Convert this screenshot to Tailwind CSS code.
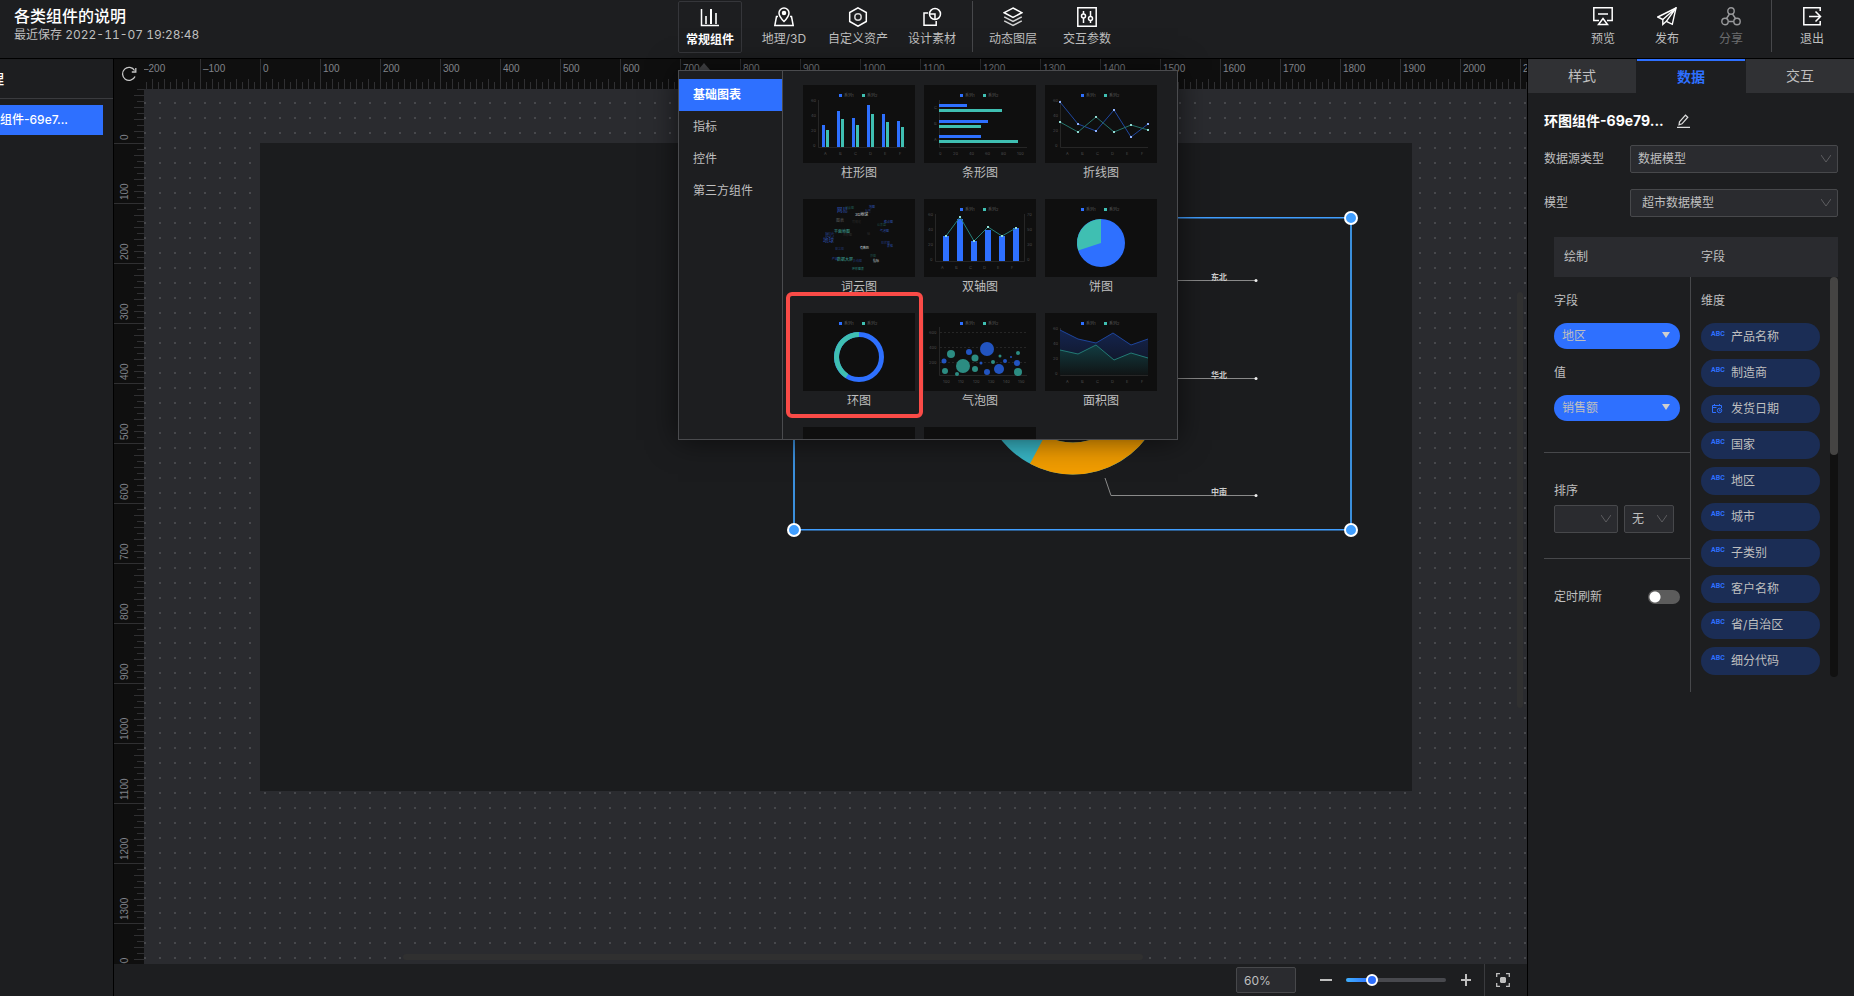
<!DOCTYPE html>
<html lang="zh-CN">
<head>
  <meta charset="UTF-8" />
  <meta name="viewport" content="width=device-width, initial-scale=1" />
  <title>各类组件的说明</title>
  <script src="https://cdn.jsdelivr.net/npm/@tailwindcss/browser@4"></script>
</head>
<body class="h-screen flex flex-col overflow-hidden bg-[#1d1e20] font-['Inter','Noto_Sans_CJK_SC',sans-serif] text-xs text-[#bfbfbf]">

  <!-- Header -->
  <header class="relative z-20 flex h-[59px] shrink-0 border-b border-black">
    <div class="w-[678px] shrink-0 pl-3.5 pt-1.5">
      <h1 class="text-base leading-5 font-medium text-white">各类组件的说明</h1>
      <p class="leading-[18px] tabular-nums">最近保存 2022-11-07 19:28:48</p>
    </div>

    <nav class="flex pt-px" aria-label="组件">
      <div class="relative">
        <button aria-expanded="true" class="flex h-[52px] w-16 flex-col items-center gap-0.5 rounded-xs border border-[#35363a] pt-1.5 font-bold text-white">
          <svg class="size-5" viewBox="0 0 20 20" fill="none" stroke="currentColor" aria-hidden="true">
            <path d="M1.500 1v16.500H19" stroke-width="1.500"/><path d="M6 8v8M16 5v11" stroke-width="2" opacity=".8"/><path d="M11 1v15" stroke-width="2"/>
          </svg>
          <span class="leading-5">常规组件</span>
        </button>

        <!-- Component picker -->
        <div class="absolute left-5 top-[62px] border-x-[6px] border-b-[7px] border-x-transparent border-b-[#4a4b4e]"></div>
        <div class="absolute left-0 top-[69px] flex h-[370px] w-[500px] overflow-hidden border border-[#4a4b4e] bg-[#1d1e20] shadow-[0_0_28px_rgba(0,0,0,0.6)]">
          <ul class="w-[104px] shrink-0 border-r border-[#4a4b4e] pt-2">
            <li><a href="#" class="block bg-[#2e70ff] px-3.5 leading-8 font-bold text-white">基础图表</a></li>
            <li><a href="#" class="block px-3.5 leading-8">指标</a></li>
            <li><a href="#" class="block px-3.5 leading-8">控件</a></li>
            <li><a href="#" class="block px-3.5 leading-8">第三方组件</a></li>
          </ul>
          <div class="grid flex-1 auto-rows-[98px] grid-cols-[112px_112px_112px] content-start gap-x-[9px] gap-y-4 px-5 pt-3.5">
            <figure class="text-center">
              <svg class="h-[78px] w-[112px] bg-[#0f0f0f]" viewBox="0 0 112 78" aria-hidden="true">
                <g id="legend"><path d="M36 9h3v3h-3z" fill="#2e70ff"/><path d="M59 9h3v3h-3z" fill="#3fbfb2"/><text x="41" y="12" font-size="4" fill="#555">系列1</text><text x="64" y="12" font-size="4" fill="#555">系列2</text></g>
                <g id="axes" font-size="4" fill="#4c4c4c">
                  <path d="M15.500 15v47.500H103" fill="none" stroke="#262626"/>
                  <text x="8" y="17">60</text><text x="8" y="32">40</text><text x="8" y="47">20</text><text x="10" y="62">0</text>
                  <text x="21" y="70">A</text><text x="36" y="70">B</text><text x="51" y="70">C</text><text x="66" y="70">D</text><text x="81" y="70">E</text><text x="96" y="70">F</text>
                </g>
                <path fill="#2e70ff" d="M19 40h3v22h-3zM34 26h3v36h-3zM49 33h3v29h-3zM64 20h3v42h-3zM79 29h3v33h-3zM94 36h3v26h-3z"/>
                <path fill="#3fbfb2" d="M23 45h3v17h-3zM38 34h3v28h-3zM53 40h3v22h-3zM68 29h3v33h-3zM83 37h3v25h-3zM98 42h3v20h-3z"/>
              </svg>
              <figcaption class="leading-5">柱形图</figcaption>
            </figure>
            <figure class="text-center">
              <svg class="h-[78px] w-[112px] bg-[#0f0f0f]" viewBox="0 0 112 78" aria-hidden="true">
                <use href="#legend"/>
                <path d="M15.500 15v47.500H103" fill="none" stroke="#262626"/>
                <g font-size="4" fill="#4c4c4c"><text x="10" y="24">C</text><text x="10" y="40">B</text><text x="10" y="56">A</text><text x="15" y="70">0</text><text x="29" y="70">20</text><text x="45" y="70">40</text><text x="61" y="70">60</text><text x="77" y="70">80</text><text x="93" y="70">100</text></g>
                <path fill="#2e70ff" d="M15 19h28v3H15zM15 35h49v3H15zM15 50h42v3H15z"/>
                <path fill="#3fbfb2" d="M15 24h63v3H15zM15 40h42v3H15zM15 55h79v3H15z"/>
              </svg>
              <figcaption class="leading-5">条形图</figcaption>
            </figure>
            <figure class="text-center">
              <svg class="h-[78px] w-[112px] bg-[#0f0f0f]" viewBox="0 0 112 78" aria-hidden="true">
                <use href="#legend"/><use href="#axes"/>
                <path d="M15 17l18 22 18 7 18-21 17 27 17-13" fill="none" stroke="#1f47a0"/>
                <path d="M15 37l18 10 18-15 18 15 17-7 17 5" fill="none" stroke="#26736c"/>
                <path fill="#8fb2ff" d="M14 16h2v2h-2zM32 38h2v2h-2zM50 45h2v2h-2zM68 24h2v2h-2zM85 51h2v2h-2zM102 38h2v2h-2z"/>
                <path fill="#8fd9d1" d="M14 36h2v2h-2zM32 46h2v2h-2zM50 31h2v2h-2zM68 46h2v2h-2zM85 39h2v2h-2zM102 44h2v2h-2z"/>
              </svg>
              <figcaption class="leading-5">折线图</figcaption>
            </figure>
            <figure class="text-center">
              <svg class="h-[78px] w-[112px] bg-[#0f0f0f]" viewBox="0 0 112 78" font-size="3" aria-hidden="true">
                <g fill="#2c4da8"><text x="34" y="13" font-size="5.500">网易</text><text x="66" y="9">地图</text><text x="62" y="13" opacity=".6">标签</text><text x="22" y="37" font-size="5" opacity=".7">图片</text><text x="20" y="43" font-size="5.500">地球</text><text x="81" y="24">散点图</text><text x="77" y="33">气泡图</text><text x="78" y="45" opacity=".7">柱状图</text><text x="84" y="48">表格</text><text x="29" y="61">产品</text><text x="50" y="63" opacity=".6">折线图</text><text x="32" y="51" opacity=".5">雷达图</text></g>
                <g fill="#2b8179"><text x="42" y="10" opacity=".6">词云图</text><text x="31" y="34" fill="#3fa398" font-size="4">平面地图</text><text x="34" y="62" fill="#3fa398" font-size="4">数据大屏</text><text x="49" y="71">环形图表</text><text x="74" y="27" opacity=".5">仪表盘</text><text x="67" y="58" opacity=".5">饼图</text></g>
                <g fill="#c9d3d6"><text x="52" y="17" font-size="4">3D地球</text><text x="57" y="50">有数BI</text><text x="70" y="63">指标</text></g>
                <g fill="#2b2b2b"><text x="33" y="23" font-size="4" fill="#555">图表</text><text x="49" y="24">可视化</text><text x="40" y="37">面积图</text><text x="64" y="36">轴</text></g>
              </svg>
              <figcaption class="leading-5">词云图</figcaption>
            </figure>
            <figure class="text-center">
              <svg class="h-[78px] w-[112px] bg-[#0f0f0f]" viewBox="0 0 112 78" aria-hidden="true">
                <use href="#legend"/>
                <path d="M11.500 15v47.500h89V15" fill="none" stroke="#262626"/>
                <g font-size="4" fill="#4c4c4c"><text x="4" y="17">60</text><text x="4" y="32">40</text><text x="4" y="47">20</text><text x="6" y="62">0</text><text x="103" y="17">70</text><text x="103" y="32">50</text><text x="103" y="47">30</text><text x="103" y="62">0</text><text x="17" y="70">A</text><text x="31" y="70">B</text><text x="45" y="70">C</text><text x="59" y="70">D</text><text x="73" y="70">E</text><text x="87" y="70">F</text></g>
                <path fill="#2e70ff" d="M19 37h6v25h-6zM33 20h6v42h-6zM47 42h6v20h-6zM61 31h6v31h-6zM75 37h6v25h-6zM89 29h6v33h-6z"/>
                <path d="M22 37l14-19 14 24 14-14 14 9 14-8" fill="none" stroke="#26807a"/>
                <path fill="#8fe0d8" d="M21 36h2v2h-2zM35 17h2v2h-2zM49 41h2v2h-2zM63 27h2v2h-2zM77 36h2v2h-2zM91 28h2v2h-2z"/>
              </svg>
              <figcaption class="leading-5">双轴图</figcaption>
            </figure>
            <figure class="text-center">
              <svg class="h-[78px] w-[112px] bg-[#0f0f0f]" viewBox="0 0 112 78" aria-hidden="true">
                <use href="#legend"/>
                <circle cx="56" cy="44" r="24" fill="#2e70ff"/><path d="M56 44V20A24 24 0 0 0 33.200 51.500z" fill="#3fbfb2"/>
              </svg>
              <figcaption class="leading-5">饼图</figcaption>
            </figure>
            <figure class="text-center">
              <svg class="h-[78px] w-[112px] bg-[#0f0f0f]" viewBox="0 0 112 78" aria-hidden="true">
                <use href="#legend"/>
                <circle cx="56" cy="44" r="22.500" fill="none" stroke="#2e70ff" stroke-width="5"/><path d="M56 21.500A22.500 22.500 0 0 0 44 63" fill="none" stroke="#3fbfb2" stroke-width="5"/>
              </svg>
              <figcaption class="leading-5">环图</figcaption>
            </figure>
            <figure class="text-center">
              <svg class="h-[78px] w-[112px] bg-[#0f0f0f]" viewBox="0 0 112 78" aria-hidden="true">
                <use href="#legend"/>
                <path d="M15.500 14v48.500H103" fill="none" stroke="#262626"/><path d="M16 19.500h87M16 34.500h87M16 49.500h87" stroke="#262626" stroke-dasharray="2 2"/>
                <g font-size="4" fill="#4c4c4c"><text x="5" y="21">600</text><text x="5" y="36">400</text><text x="5" y="51">200</text><text x="19" y="70">100</text><text x="34" y="70">110</text><text x="49" y="70">120</text><text x="64" y="70">130</text><text x="79" y="70">140</text><text x="94" y="70">150</text></g>
                <g fill="#2c8c82"><circle cx="27" cy="41" r="4"/><circle cx="21" cy="58" r="3"/><circle cx="39" cy="53" r="7"/><circle cx="33" cy="61" r="2"/><circle cx="51" cy="45" r="3.500"/><circle cx="51" cy="56" r="3"/><circle cx="69" cy="49" r="2"/><circle cx="76" cy="43" r="1.500"/><circle cx="94" cy="40" r="2"/><circle cx="94" cy="59" r="4"/></g>
                <g fill="#2254c0"><circle cx="20" cy="48" r="2.500"/><circle cx="45" cy="39" r="3"/><circle cx="63" cy="36" r="7"/><circle cx="57" cy="50" r="1.500"/><circle cx="63" cy="59" r="3"/><circle cx="75" cy="56" r="5"/><circle cx="81" cy="48" r="2"/><circle cx="87" cy="44" r="1"/><circle cx="93" cy="50" r="3"/></g>
              </svg>
              <figcaption class="leading-5">气泡图</figcaption>
            </figure>
            <figure class="text-center">
              <svg class="h-[78px] w-[112px] bg-[#0f0f0f]" viewBox="0 0 112 78" aria-hidden="true">
                <defs>
                  <linearGradient id="blueFade" x2="0" y2="1"><stop stop-color="#14244f"/><stop offset="1" stop-color="#10131c"/></linearGradient>
                  <linearGradient id="tealFade" x2="0" y2="1"><stop stop-color="#123c42"/><stop offset="1" stop-color="#101415"/></linearGradient>
                </defs>
                <use href="#legend"/><use href="#axes"/>
                <path d="M15 17l18 9 18 4 17-10 18 12 17-6v36H15z" fill="url(#blueFade)"/><path d="M15 17l18 9 18 4 17-10 18 12 17-6" fill="none" stroke="#1e459c"/>
                <path d="M15 37l18 4 18-9 18 15 17-7 17 5v17H15z" fill="url(#tealFade)"/><path d="M15 37l18 4 18-9 18 15 17-7 17 5" fill="none" stroke="#227a74"/>
              </svg>
              <figcaption class="leading-5">面积图</figcaption>
            </figure>
            <div class="h-[78px] bg-[#0f0f0f]"></div>
            <div class="h-[78px] bg-[#0f0f0f]"></div>
          </div>
        </div>
        <!-- Highlighted chart type -->
        <div class="pointer-events-none absolute left-[108px] top-[291px] h-[126px] w-[137px] rounded-md border-4 border-[#fa4b47]"></div>
      </div>

      <div class="ml-2.5 flex gap-2.5">
        <button class="flex h-[52px] w-16 flex-col items-center gap-0.5 pt-1.5 whitespace-nowrap">
          <svg class="size-5 text-white" viewBox="0 0 20 20" fill="none" stroke="currentColor" stroke-width="1.500" aria-hidden="true"><path d="M4 9.500H2.500L.8 18.500h18.400L17.500 9.500H16"/><path d="M10 14.500C6.500 11 5 9 5 6a5 5 0 0 1 10 0c0 3-1.500 5-5 8.500z"/><circle cx="10" cy="6" r="1.500" fill="currentColor"/></svg>
          <span class="leading-5">地理/3D</span>
        </button>
        <button class="flex h-[52px] w-16 flex-col items-center gap-0.5 pt-1.5 whitespace-nowrap">
          <svg class="size-5 text-white" viewBox="0 0 20 20" fill="none" stroke="currentColor" stroke-width="1.500" aria-hidden="true"><path d="M10 .8l8.300 4.700v9L10 19.200l-8.300-4.700v-9z"/><circle cx="10" cy="10" r="3.200" opacity=".8"/></svg>
          <span class="leading-5">自定义资产</span>
        </button>
        <button class="flex h-[52px] w-16 flex-col items-center gap-0.5 pt-1.5 whitespace-nowrap">
          <svg class="size-5 text-white" viewBox="0 0 20 20" fill="none" stroke="currentColor" stroke-width="1.500" aria-hidden="true"><path d="M6 6H2v12.200h12.200V14"/><circle cx="13" cy="7" r="5.500"/><path d="M8 7h5v5"/></svg>
          <span class="leading-5">设计素材</span>
        </button>
      </div>
      <div class="ml-2 mr-2 h-[51px] w-px bg-[#47484b]"></div>
      <div class="flex gap-2.5">
        <button class="flex h-[52px] w-16 flex-col items-center gap-0.5 pt-1.5 whitespace-nowrap">
          <svg class="size-5 text-white" viewBox="0 0 20 20" fill="none" stroke="currentColor" stroke-width="1.500" aria-hidden="true"><path d="M10 1l8.800 4.700L10 10.400 1.200 5.700z"/><path d="M1.200 9.800l8.800 4.700 8.800-4.700" opacity=".8"/><path d="M1.200 13.800l8.800 4.700 8.800-4.700" opacity=".8"/></svg>
          <span class="leading-5">动态图层</span>
        </button>
        <button class="flex h-[52px] w-16 flex-col items-center gap-0.5 pt-1.5 whitespace-nowrap">
          <svg class="size-5 text-white" viewBox="0 0 20 20" fill="none" stroke="currentColor" stroke-width="1.500" aria-hidden="true"><path d="M.8.8h18.400v18.400H.8z"/><path d="M6.500 4v3M6.500 11v5M13.500 4v5.500M13.500 13.500V16"/><circle cx="6.500" cy="9" r="2"/><circle cx="13.500" cy="11.500" r="2"/></svg>
          <span class="leading-5">交互参数</span>
        </button>
      </div>
    </nav>

    <div class="ml-auto flex pr-2.5">
      <button class="flex w-16 flex-col items-center gap-0.5 pt-[7px]">
        <svg class="size-5 text-white" viewBox="0 0 20 20" fill="none" stroke="currentColor" stroke-width="1.500" aria-hidden="true"><path d="M6 13.500H.8V.8h18.400v12.700H14M5 7h10"/><path d="M10 11.500l4.500 6h-9z"/></svg>
        <span class="leading-5">预览</span>
      </button>
      <button class="flex w-16 flex-col items-center gap-0.5 pt-[7px]">
        <svg class="size-5 text-white" viewBox="0 0 20 20" fill="none" stroke="currentColor" stroke-width="1.400" aria-hidden="true"><path d="M19 1L.8 10l5 2.500v5l3.500-3.200 6 3z"/><path d="M19 1L5.800 12.500M19 1L9.300 14.300"/></svg>
        <span class="leading-5">发布</span>
      </button>
      <button class="flex w-16 flex-col items-center gap-0.5 pt-[7px] text-[#6c6d6f]">
        <svg class="size-5 text-[#98999b]" viewBox="0 0 20 20" fill="none" stroke="currentColor" stroke-width="1.400" aria-hidden="true"><circle cx="10" cy="4" r="3.200"/><circle cx="4" cy="14.500" r="3.200"/><circle cx="16" cy="14.500" r="3.200"/><path d="M8.500 7l-3 4.500M11.500 7l3 4.500M7.200 14.500h5.600"/></svg>
        <span class="leading-5">分享</span>
      </button>
      <div class="mx-2 h-[52px] w-px bg-[#47484b]"></div>
      <button class="flex w-16 flex-col items-center gap-0.5 pt-[7px]">
        <svg class="size-5 text-white" viewBox="0 0 20 20" fill="none" stroke="currentColor" stroke-width="1.500" aria-hidden="true"><path d="M18.200 4V.8H1.800v17h16.400V14"/><path d="M7 9.500h11M13.500 4.500l5 5-5 5"/></svg>
        <span class="leading-5">退出</span>
      </button>
    </div>
  </header>

  <div class="flex min-h-0 flex-1">
    <!-- Layer list -->
    <aside class="w-[114px] shrink-0 overflow-hidden border-r border-black whitespace-nowrap">
      <h2 class="-ml-[52px] h-10 w-[166px] border-b border-[#3a3b3e] text-sm leading-10 font-medium text-white">图层管理</h2>
      <a href="#" class="mt-1.5 mr-2.5 block bg-[#2e70ff] leading-[30px] font-medium text-white">组件-69e7...</a>
    </aside>

    <main class="flex min-w-0 flex-1 flex-col">
      <div class="grid min-h-0 flex-1 grid-cols-[30px_1fr] grid-rows-[30px_1fr]">
        <button aria-label="刷新" class="flex items-center justify-center bg-[#0f0f0f]">
          <svg class="size-4" viewBox="0 0 16 16" fill="none" stroke="#c8c8c8" stroke-width="1.300" aria-hidden="true"><path d="M14 10.500A6.500 6.500 0 1 1 13.600 4.500"/><path d="M14.800 2v4h-4" /></svg>
        </button>
        <svg id="rulerX" class="size-full bg-[#0f0f0f]" font-family="Liberation Sans, sans-serif" font-size="10" fill="#80838a">
          <pattern id="ticksX" x="-4" width="60" height="30" patternUnits="userSpaceOnUse">
            <path d="M.5 0v30M6.500 23v7M12.500 20v10M18.500 23v7M24.500 20v10M30.500 23v7M36.500 20v10M42.500 23v7M48.500 20v10M54.500 23v7" stroke="#303032"/>
          </pattern>
          <rect width="100%" height="100%" fill="url(#ticksX)"/>
        </svg>
        <svg id="rulerY" class="size-full bg-[#0f0f0f]" font-family="Liberation Sans, sans-serif" font-size="10" fill="#80838a">
          <pattern id="ticksY" y="-6" width="30" height="60" patternUnits="userSpaceOnUse">
            <path d="M0 .5h30M23 6.500h7M20 12.500h10M23 18.500h7M20 24.500h10M23 30.500h7M20 36.500h10M23 42.500h7M20 48.500h10M23 54.500h7" stroke="#303032"/>
          </pattern>
          <rect width="100%" height="100%" fill="url(#ticksY)"/>
        </svg>

        <!-- Canvas -->
        <div class="relative overflow-hidden bg-[#2a2b2f] bg-[conic-gradient(from_270deg_at_2px_2px,#47484c_90deg,transparent_0deg)] bg-[length:15px_15px] bg-[position:0px_13px]">
          <div class="absolute left-[116px] top-[54px] h-[648px] w-[1152px] bg-[#1b1c1e]">
            <svg class="absolute left-[534px] top-[75px] h-[312px] w-[557px] overflow-visible" viewBox="0 0 557 312" aria-hidden="true">
              <g fill="none" stroke-width="32">
                <circle cx="279" cy="165" r="75.500" stroke="#38b6c6"/>
                <path d="M243.500 231.600A75.500 75.500 0 0 0 354.500 165" stroke="#f09c00"/>
              </g>
              <g fill="none" stroke="#8a8a8a"><path d="M340 62.500h122M340 162l40-1.500h82M311 260l6 17.500h145"/></g>
              <g fill="#eee"><circle cx="462" cy="62.500" r="1.500"/><circle cx="462" cy="160.500" r="1.500"/><circle cx="462" cy="277.500" r="1.500"/></g>
              <g font-size="8" font-weight="700" fill="#ccc"><text x="417" y="62">东北</text><text x="417" y="160">华北</text><text x="417" y="277">中南</text></g>
              <path d="M0 0v312M557 0v312" stroke="#3b8fdc" stroke-width="2"/>
              <path d="M0-.3h557M0 311.700h557" stroke="#409eff" stroke-width="1.400"/>
              <g fill="#409eff" stroke="#fff" stroke-width="2"><circle r="6"/><circle cx="557" r="6"/><circle cy="312" r="6"/><circle cx="557" cy="312" r="6"/></g>
            </svg>
          </div>
          <div class="absolute bottom-1 left-[259px] h-1.5 w-[740px] rounded-full bg-[#303030]"></div>
          <div class="absolute right-1 top-[203px] h-[416px] w-1.5 rounded-full bg-[#303030]"></div>
        </div>
      </div>

      <footer class="flex h-8 shrink-0 items-center justify-end">
        <input type="text" value="60%" aria-label="缩放比例" class="h-[26px] w-[60px] rounded-xs border border-[#47484b] bg-[#2a2b2f] px-[7px] text-[#bfbfbf]" />
        <button aria-label="缩小" class="ml-6"><svg class="size-3" viewBox="0 0 12 12" aria-hidden="true"><path d="M0 5h12v2H0z" fill="#bfbfbf"/></svg></button>
        <input type="range" min="0" max="100" value="23" aria-label="缩放" class="ml-3.5 h-1 w-[100px] appearance-none rounded-full bg-[linear-gradient(to_right,#40b0ff_0%,#2e70ff_25%,#48494e_25%)] [&::-webkit-slider-thumb]:size-3 [&::-webkit-slider-thumb]:appearance-none [&::-webkit-slider-thumb]:rounded-full [&::-webkit-slider-thumb]:border-2 [&::-webkit-slider-thumb]:border-white [&::-webkit-slider-thumb]:bg-[#2e70ff]" />
        <button aria-label="放大" class="ml-3.5"><svg class="size-3" viewBox="0 0 12 12" aria-hidden="true"><path d="M1 5h10v2H1zM5 0h2v12H5z" fill="#bfbfbf"/></svg></button>
        <div class="ml-3 h-8 w-px bg-[#3a3b3e]"></div>
        <button aria-label="适应画布" class="mx-[11px] pr-1.5"><svg class="size-3.5" viewBox="0 0 14 14" fill="none" stroke="#bfbfbf" stroke-width="1.300" aria-hidden="true"><path d="M.7 4V.7H4M10 .7h3.300V4M13.300 10v3.300H10M4 13.300H.7V10"/><path d="M5 4h4l1 1v4l-1 1H5L4 9V5z" fill="#bfbfbf" stroke="none"/></svg></button>
      </footer>
    </main>

    <!-- Properties -->
    <aside class="w-[327px] shrink-0 border-l border-black">
      <div class="grid grid-cols-3 gap-px text-sm">
        <button class="h-[34px] bg-[#303134]">样式</button>
        <button class="h-[34px] border-t-2 border-[#2e70ff] font-bold text-[#2e70ff]">数据</button>
        <button class="h-[34px] bg-[#303134]">交互</button>
      </div>

      <div class="px-4 pt-4">
        <div class="flex h-6 items-center gap-3 text-sm font-bold text-white">
          <h2>环图组件-69e79...</h2>
          <button aria-label="重命名"><svg class="size-3.5" viewBox="0 0 14 14" fill="none" stroke="#ddd" stroke-width="1.200" aria-hidden="true"><path d="M1 13.300h13M3 10.800l.5-3L9.500 1.200l2.300 2L6 9.800z"/></svg></button>
        </div>

        <div class="mt-3 flex items-center">
          <label for="sourceType" class="w-[86px]">数据源类型</label>
          <div class="relative flex-1">
            <select id="sourceType" class="block h-7 w-full appearance-none rounded-xs border border-[#47484b] bg-[#2a2b2f] px-[7px]"><option>数据模型</option></select>
            <svg class="pointer-events-none absolute right-[7px] top-2 h-3 w-2.5" viewBox="0 0 10 12" fill="none" stroke="#5c5d60" aria-hidden="true"><path d="M0 2l5 7 5-7"/></svg>
          </div>
        </div>
        <div class="mt-4 flex items-center">
          <label for="model" class="w-[86px]">模型</label>
          <div class="relative flex-1">
            <select id="model" class="block h-7 w-full appearance-none rounded-xs border border-[#47484b] bg-[#2a2b2f] px-[11px]"><option>超市数据模型</option></select>
            <svg class="pointer-events-none absolute right-[7px] top-2 h-3 w-2.5" viewBox="0 0 10 12" fill="none" stroke="#5c5d60" aria-hidden="true"><path d="M0 2l5 7 5-7"/></svg>
          </div>
        </div>

        <div class="mt-5 ml-2.5 flex h-10 items-center bg-[#2a2b2f] pl-2.5">
          <h3 class="w-[137px]">绘制</h3>
          <h3>字段</h3>
        </div>

        <div class="flex">
          <!-- Bound fields -->
          <div class="h-[415px] w-[147px] border-r border-[#47484b]">
            <div class="flex h-44 flex-col border-b border-[#47484b] pl-2.5 pr-2.5 pt-3.5">
              <label for="dimension" class="leading-5">字段</label>
              <div class="relative mt-3">
                <select id="dimension" class="block h-[26px] w-full appearance-none rounded-full bg-[#2e70ff] px-2"><option>地区</option></select>
                <svg class="pointer-events-none absolute right-2.5 top-[9px] h-1.5 w-2" viewBox="0 0 8 6" aria-hidden="true"><path d="M0 0h8L4 6z" fill="#cfcfcf"/></svg>
              </div>
              <label for="measure" class="mt-3.5 leading-5">值</label>
              <div class="relative mt-3">
                <select id="measure" class="block h-[26px] w-full appearance-none rounded-full bg-[#2e70ff] px-2"><option>销售额</option></select>
                <svg class="pointer-events-none absolute right-2.5 top-[9px] h-1.5 w-2" viewBox="0 0 8 6" aria-hidden="true"><path d="M0 0h8L4 6z" fill="#cfcfcf"/></svg>
              </div>
            </div>
            <div class="h-[106px] border-b border-[#47484b] pl-2.5 pt-7">
              <label for="sortField" class="block leading-5">排序</label>
              <div class="mt-1 flex gap-1.5">
                <div class="relative w-16">
                  <select id="sortField" class="block h-7 w-full appearance-none rounded-xs border border-[#47484b] bg-[#2a2b2f] px-[7px]"><option></option></select>
                  <svg class="pointer-events-none absolute right-[7px] top-2 h-3 w-2.5" viewBox="0 0 10 12" fill="none" stroke="#5c5d60" aria-hidden="true"><path d="M0 2l5 7 5-7"/></svg>
                </div>
                <div class="relative w-[50px]">
                  <select aria-label="排序方式" class="block h-7 w-full appearance-none rounded-xs border border-[#47484b] bg-[#2a2b2f] px-[7px]"><option>无</option></select>
                  <svg class="pointer-events-none absolute right-[7px] top-2 h-3 w-2.5" viewBox="0 0 10 12" fill="none" stroke="#5c5d60" aria-hidden="true"><path d="M0 2l5 7 5-7"/></svg>
                </div>
              </div>
            </div>
            <div class="flex items-center justify-between px-2.5 pt-7">
              <label for="autoRefresh" class="leading-5">定时刷新</label>
              <input id="autoRefresh" type="checkbox" role="switch" class="h-3.5 w-8 appearance-none rounded-full bg-[#5c5c5c] bg-[radial-gradient(circle_at_7px_50%,#fff_5px,transparent_6px)]" />
            </div>
          </div>

          <!-- Available fields -->
          <div class="h-[400px] w-[119px] ml-2.5 pt-3.5">
            <h4 class="leading-5">维度</h4>
            <ul class="mt-3 flex flex-col gap-2">
              <li class="flex h-7 items-center rounded-full bg-[#1b2d55] pl-2.5"><span class="w-5 pb-1 font-['Roboto'] text-[7px] font-bold text-[#2e70ff]">ABC</span>产品名称</li>
              <li class="flex h-7 items-center rounded-full bg-[#1b2d55] pl-2.5"><span class="w-5 pb-1 font-['Roboto'] text-[7px] font-bold text-[#2e70ff]">ABC</span>制造商</li>
              <li class="flex h-7 items-center rounded-full bg-[#1b2d55] pl-2.5">
                <svg class="mr-2 h-3 w-3" viewBox="0 0 12 12" fill="none" stroke="#2e70ff" aria-hidden="true"><path d="M5 9.500H1.500v-7h9V5M1.500 4.500h4M3.500 1v2M8.500 1v2"/><circle cx="8.500" cy="7.500" r="2.200"/><path d="M8.500 6.500v1.200h1"/></svg>发货日期</li>
              <li class="flex h-7 items-center rounded-full bg-[#1b2d55] pl-2.5"><span class="w-5 pb-1 font-['Roboto'] text-[7px] font-bold text-[#2e70ff]">ABC</span>国家</li>
              <li class="flex h-7 items-center rounded-full bg-[#1b2d55] pl-2.5"><span class="w-5 pb-1 font-['Roboto'] text-[7px] font-bold text-[#2e70ff]">ABC</span>地区</li>
              <li class="flex h-7 items-center rounded-full bg-[#1b2d55] pl-2.5"><span class="w-5 pb-1 font-['Roboto'] text-[7px] font-bold text-[#2e70ff]">ABC</span>城市</li>
              <li class="flex h-7 items-center rounded-full bg-[#1b2d55] pl-2.5"><span class="w-5 pb-1 font-['Roboto'] text-[7px] font-bold text-[#2e70ff]">ABC</span>子类别</li>
              <li class="flex h-7 items-center rounded-full bg-[#1b2d55] pl-2.5"><span class="w-5 pb-1 font-['Roboto'] text-[7px] font-bold text-[#2e70ff]">ABC</span>客户名称</li>
              <li class="flex h-7 items-center rounded-full bg-[#1b2d55] pl-2.5"><span class="w-5 pb-1 font-['Roboto'] text-[7px] font-bold text-[#2e70ff]">ABC</span>省/自治区</li>
              <li class="flex h-7 items-center rounded-full bg-[#1b2d55] pl-2.5"><span class="w-5 pb-1 font-['Roboto'] text-[7px] font-bold text-[#2e70ff]">ABC</span>细分代码</li>
            </ul>
          </div>
          <div class="ml-auto h-[400px] w-2 rounded-full bg-[#111]"><div class="h-[178px] rounded-full bg-[#454443]"></div></div>
        </div>
      </div>
    </aside>
  </div>

  <script>
    // Ruler labels: 100 canvas units are 60px on screen at 60% zoom
    const STEP = 60;

    function addLabel(ruler, text, x, y, rotate) {
      const label = document.createElementNS('http://www.w3.org/2000/svg', 'text');
      label.textContent = text;
      label.setAttribute('transform', `translate(${x} ${y})` + (rotate ? ' rotate(-90)' : ''));
      ruler.appendChild(label);
    }

    const rulerX = document.getElementById('rulerX');
    for (let i = -2; i <= 21; i++) {
      addLabel(rulerX, i < 0 ? '–' + -i * 100 : i * 100, 119 + i * STEP, 13);
    }

    const rulerY = document.getElementById('rulerY');
    for (let i = 0; i <= 14; i++) {
      addLabel(rulerY, i * 100, 14, 51 + i * STEP, true);
    }
  </script>
</body>
</html>
